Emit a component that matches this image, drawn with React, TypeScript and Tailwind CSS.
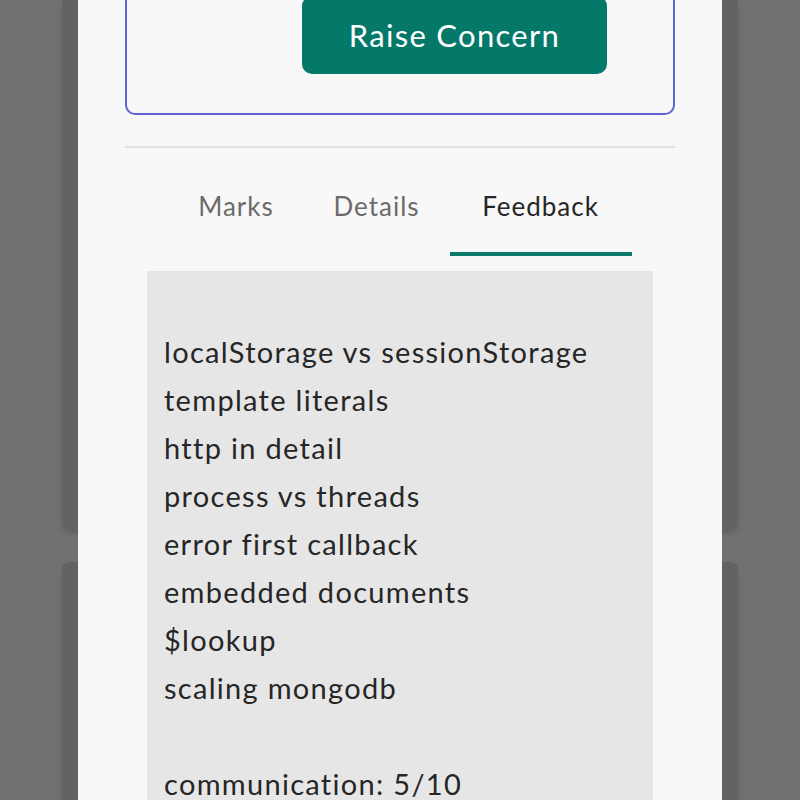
const feedback = [
  "",
  "localStorage vs sessionStorage",
  "template literals",
  "http in detail",
  "process vs threads",
  "error first callback",
  "embedded documents",
  "$lookup",
  "scaling mongodb",
  "",
  "communication: 5/10",
];

const tabs = [
  { label: "Marks", width: "w-[135px]", active: false },
  { label: "Details", width: "w-[146px]", active: false },
  { label: "Feedback", width: "w-[182px]", active: true },
];

export default function App() {
  return (
    <div className="relative h-[800px] w-[800px] overflow-hidden bg-[#717171] font-['Lato',sans-serif] [font-variant-ligatures:none]">
      {/* page behind the dialog */}
      <div className="flex flex-col gap-[31px] px-[62px]">
        <div className="h-[531px] rounded-b-lg bg-[#636363] shadow-md" />
        <div className="h-[300px] rounded-t-lg bg-[#636363] shadow-md" />
      </div>

      {/* dialog */}
      <div className="absolute inset-y-0 left-[78px] w-[644px] bg-[#f8f8f8] px-[47px]">
        <div className="-mt-[30px] rounded-[10px] border-2 border-[#5c65d2] pt-[24px] pb-[39px]">
          <button className="ml-[175px] flex h-[78px] w-[305px] items-center justify-center rounded-[10px] bg-[#04796a] text-[31px] tracking-[1.3px] text-white">
            Raise Concern
          </button>
        </div>

        <div className="mt-[31px] h-[2px] bg-[#e0e0e0]" />

        <div className="flex justify-center">
          {tabs.map((t) => (
            <div key={t.label} className={`${t.width} flex flex-col items-center pt-[42px]`}>
              <span
                className={`text-[26px] leading-[32px] tracking-[1px] ${t.active ? "text-[#262626]" : "text-[#6b6b6b]"}`}
              >
                {t.label}
              </span>
              <div className={`mt-[30px] h-[4px] w-full ${t.active ? "bg-[#0b7a6c]" : "bg-transparent"}`} />
            </div>
          ))}
        </div>

        <div className="mx-[22px] mt-[15px] h-[600px] bg-[#e6e6e6] px-[17px] pt-[9px]">
          {feedback.map((line, i) => (
            <div key={i} className="h-[48px] text-[29px] leading-[48px] tracking-[1.3px] text-[#262626]">
              {line}
            </div>
          ))}
        </div>
      </div>
    </div>
  );
}
